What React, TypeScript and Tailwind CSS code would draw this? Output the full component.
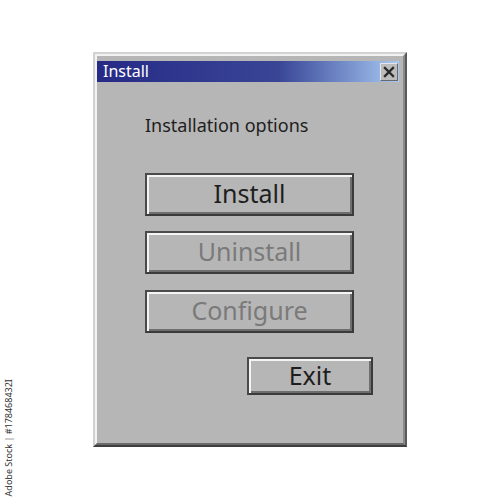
import React from "react";

const font = { fontFamily: '"Noto Sans", "Open Sans", sans-serif' };

function Btn({ label, disabled, className }: { label: string; disabled?: boolean; className: string }) {
  return (
    <div
      className={`flex items-center justify-center border-2 border-t-[#4a4a4a] border-l-[#4a4a4a] border-r-[#3a3a3a] border-b-[#3a3a3a] bg-[#b6b6b6] shadow-[inset_2px_2px_0_#f4f4f4,inset_-2px_-2px_0_#6e6e6e] text-[25px] leading-none ${
        disabled ? "text-[#7a7a7a]" : "text-[#1e1e1e]"
      } ${className}`}
    >
      <span className="-mt-[2px]">{label}</span>
    </div>
  );
}

export default function App() {
  return (
    <div className="relative w-[500px] h-[500px] bg-white overflow-hidden" style={font}>
      <div className="pt-[52px] pl-[93px]">
        {/* window frame */}
        <div className="w-[314px] h-[395px] border-2 border-t-[#d2d2d2] border-l-[#d2d2d2] border-r-[#5a5a5a] border-b-[#3e3e3e]">
          <div className="w-full h-full border-2 border-t-[#f2f2f2] border-l-[#f2f2f2] border-r-[#8a8a8a] border-b-[#6a6a6a] bg-[#b6b6b6] flex flex-col pt-[5px]">
            {/* title bar */}
            <div className="mr-[4px] h-[21px] flex items-center justify-between bg-gradient-to-r from-[#262a86] via-[#3a4596] via-60% to-[#a9c9f2] pl-[6px] pr-[1px]">
              <span className="text-white text-[16px] leading-none -mt-[1px]">Install</span>
              <div className="w-[18px] h-[18px] bg-[#bcbcbc] border border-t-[#e6e6e6] border-l-[#e6e6e6] border-r-[#6a6a6a] border-b-[#6a6a6a] flex items-center justify-center">
                <svg width="12" height="12" viewBox="0 0 12 12">
                  <path d="M2 2 L10 10 M10 2 L2 10" stroke="#2a2a2a" strokeWidth="2.4" strokeLinecap="square" />
                </svg>
              </div>
            </div>
            {/* body */}
            <div className="flex flex-col pl-[48px]">
              <div className="mt-[34px] text-[18px] leading-none text-[#1e1e1e]">Installation options</div>
              <Btn label="Install" className="mt-[39px] w-[209px] h-[43px]" />
              <Btn label="Uninstall" disabled className="mt-[15px] w-[209px] h-[43px]" />
              <Btn label="Configure" disabled className="mt-[16px] w-[209px] h-[43px]" />
              <Btn label="Exit" className="mt-[24px] ml-[102px] w-[126px] h-[38px]" />
            </div>
          </div>
        </div>
      </div>
      <div className="absolute left-[2px] top-[380px] w-[14px] h-[115px] flex items-center justify-center">
        <span className="block whitespace-nowrap text-[9px] text-[#333] -rotate-90">Adobe Stock | #178468432I</span>
      </div>
    </div>
  );
}
